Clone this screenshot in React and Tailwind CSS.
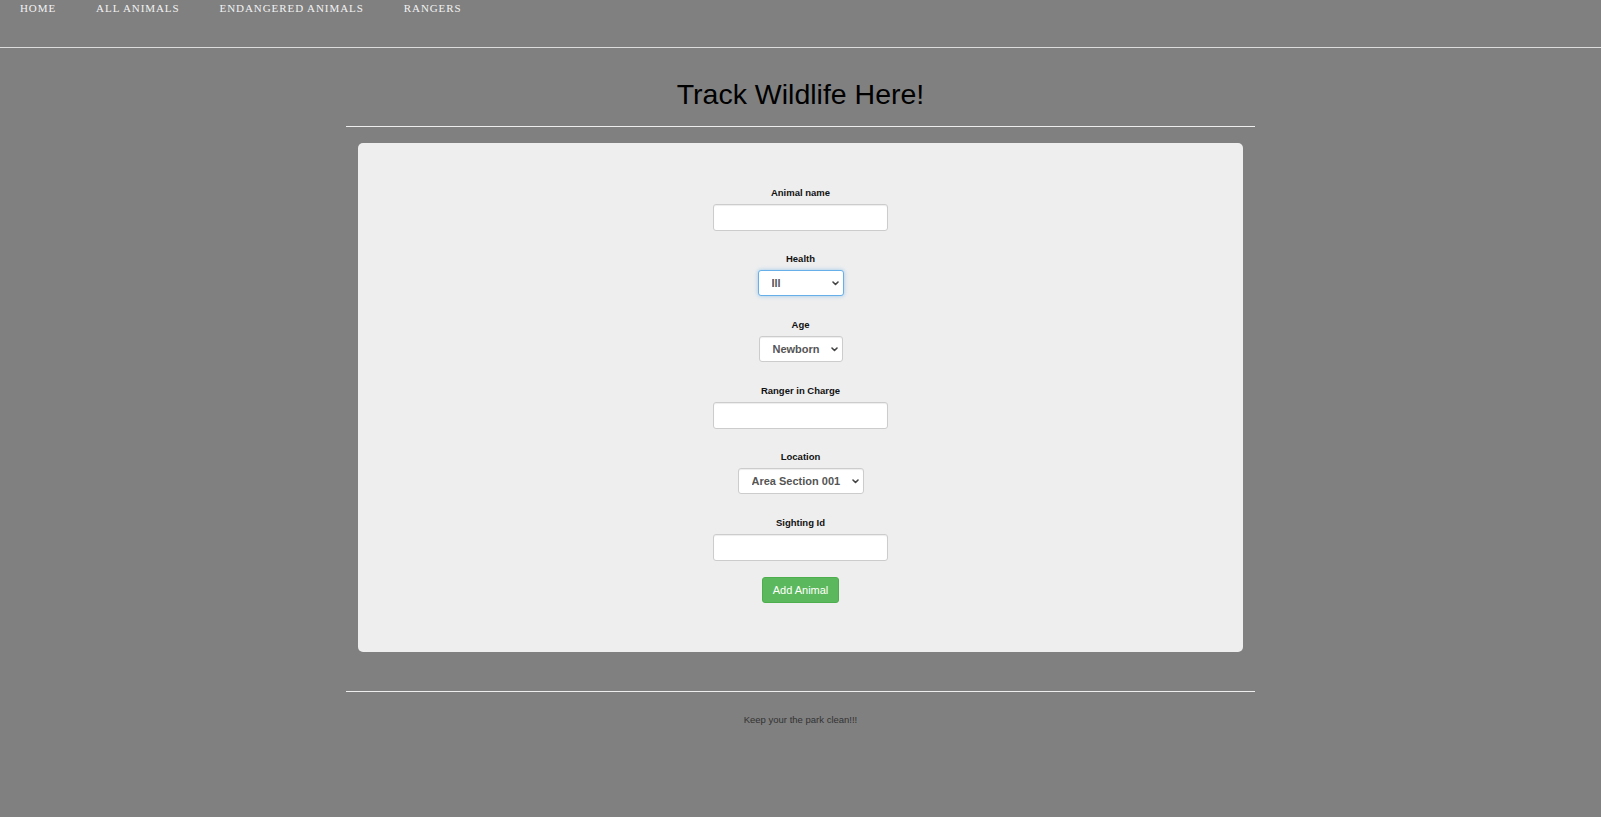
// App.jsx
const NAV_LINKS = ["Home", "All Animals", "Endangered Animals", "Rangers"];

const SANS = "font-['Liberation_Sans',Arial,sans-serif]";

function Field({ label, children, last }) {
  return (
    <div className={`flex flex-col items-center ${last ? "mb-[16px]" : "mb-[22px]"}`}>
      <label className="mb-[6px] h-[11px] text-[9.5px] font-bold leading-[11px] text-[#111]">
        {label}
      </label>
      <div className="flex h-[27px] items-start">{children}</div>
    </div>
  );
}

function TextInput() {
  return (
    <input
      type="text"
      className="h-[27px] w-[175px] rounded-[3px] border border-[#ccc] bg-white px-3 text-[11px] text-[#555] shadow-[inset_0_1px_1px_rgba(0,0,0,0.075)] outline-none"
    />
  );
}

function Select({ options, width, focused }) {
  return (
    <div className="relative">
      <select
        defaultValue={options[0]}
        className={`h-[26px] ${width} appearance-none rounded-[3px] border bg-white pl-[13px] text-[11px] font-bold text-[#555] outline-none ${
          focused
            ? "border-[#66afe9] shadow-[0_0_4px_rgba(102,175,233,0.6)]"
            : "border-[#ccc] shadow-[inset_0_1px_1px_rgba(0,0,0,0.075)]"
        }`}
      >
        {options.map((o) => (
          <option key={o}>{o}</option>
        ))}
      </select>
      {/* dropdown chevron */}
      <svg
        className="pointer-events-none absolute right-[5px] top-[11px]"
        width="7"
        height="5"
        viewBox="0 0 7 5"
        fill="none"
        aria-hidden
      >
        <path d="M1 1l2.5 2.5L6 1" stroke="#444" strokeWidth="1.6" strokeLinecap="round" strokeLinejoin="round" />
      </svg>
    </div>
  );
}

export default function App() {
  return (
    <div className={`min-h-screen bg-[#808080] ${SANS}`}>
      {/* top nav */}
      <nav className="flex h-[48px] border-b border-[#ddd]">
        {NAV_LINKS.map((l) => (
          <a
            key={l}
            href="#"
            className="px-5 pt-[1px] font-['Liberation_Serif','Times_New_Roman',serif] text-[11px] uppercase leading-[14px] tracking-[0.93px] text-[#f2f2f2] no-underline"
          >
            {l}
          </a>
        ))}
      </nav>

      <div className="mx-auto w-[909px]">
        <h1 className="pt-[27px] pb-[13px] text-center text-[28.5px] font-normal leading-[38px] text-black">
          Track Wildlife Here!
        </h1>
        <hr className="border-t border-[#eee]" />

        {/* form card */}
        <div className="mx-3 mt-4 flex flex-col items-center rounded-[5px] bg-[#eee] pt-[44px] pb-[49px]">
          <Field label="Animal name">
            <TextInput />
          </Field>
          <Field label="Health">
            <Select options={["Ill", "Okay", "Healthy"]} width="w-[86px]" focused />
          </Field>
          <Field label="Age">
            <Select options={["Newborn", "Young", "Adult"]} width="w-[84px]" />
          </Field>
          <Field label="Ranger in Charge">
            <TextInput />
          </Field>
          <Field label="Location">
            <Select
              options={["Area Section 001", "Area Section 002", "Area Section 003"]}
              width="w-[126px]"
            />
          </Field>
          <Field label="Sighting Id" last>
            <TextInput />
          </Field>
          <button
            type="button"
            className="h-[26px] w-[77px] rounded-[3px] border border-[#4cae4c] bg-[#5cb85c] text-[11px] text-white"
          >
            Add Animal
          </button>
        </div>

        <hr className="mt-[39px] border-t border-[#eee]" />
        <p className="pt-[21px] text-center text-[9.5px] leading-[14px] text-[#333]">
          Keep your the park clean!!!
        </p>
      </div>
    </div>
  );
}
